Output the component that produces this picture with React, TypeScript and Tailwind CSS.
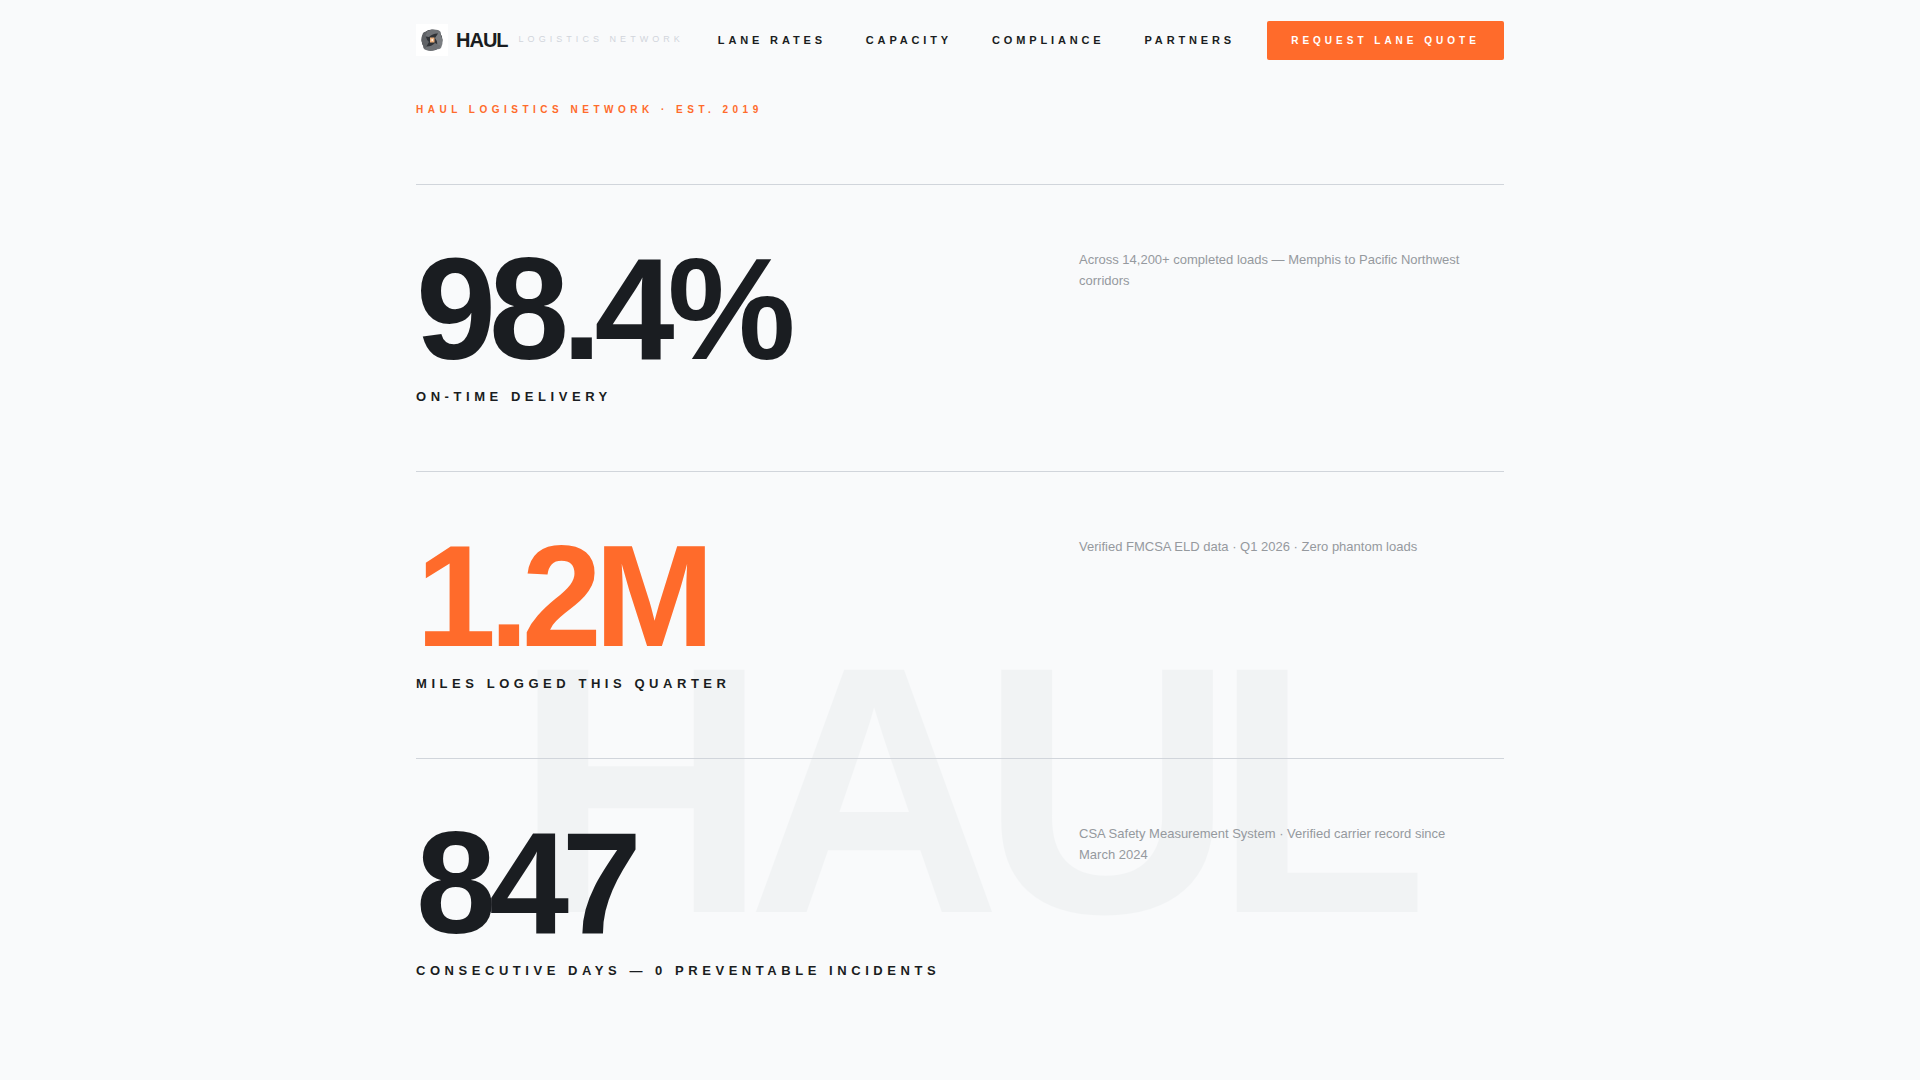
const nav = ['LANE RATES', 'CAPACITY', 'COMPLIANCE', 'PARTNERS']

const stats = [
  {
    value: '98.4%',
    label: 'ON-TIME DELIVERY',
    note: 'Across 14,200+ completed loads — Memphis to Pacific Northwest corridors',
    color: 'text-[#1a1d21]',
  },
  {
    value: '1.2M',
    label: 'MILES LOGGED THIS QUARTER',
    note: 'Verified FMCSA ELD data · Q1 2026 · Zero phantom loads',
    color: 'text-[#ff6b2b]',
  },
  {
    value: '847',
    label: 'CONSECUTIVE DAYS — 0 PREVENTABLE INCIDENTS',
    note: 'CSA Safety Measurement System · Verified carrier record since March 2024',
    color: 'text-[#1a1d21]',
  },
]

function Logo() {
  return (
    <svg width="32" height="32" viewBox="0 0 32 32" className="bg-white">
      <circle cx="16" cy="16" r="10.5" fill="#2f3236" />
      <path d="M7 12 Q11 4 22 6 Q25 7 25 10 Q18 8 13 13 Z" fill="#6f7276" />
      <path d="M23 8 Q29 16 25 24 Q23 26 20 25 Q23 19 19 14 Z" fill="#7a7d81" />
      <path d="M25 22 Q18 29 10 26 Q7 25 7 22 Q14 24 19 19 Z" fill="#6f7276" />
      <path d="M9 25 Q3 17 7 9 Q9 7 11 8 Q8 13 13 18 Z" fill="#5f6266" />
      <rect x="14" y="13.5" width="4.5" height="5" fill="#eeb27f" />
      <rect x="15.5" y="15" width="1.5" height="2" fill="#fff1e2" />
    </svg>
  )
}

export default function App() {
  return (
    <div className="relative min-h-[1080px] overflow-hidden bg-[#f9fafb] font-['Liberation_Sans',Arial,sans-serif]">
      <div
        aria-hidden
        className="absolute left-[514px] top-[614px] text-[352px] font-bold leading-none tracking-[-0.06em] text-[#2a4a50] opacity-[0.03]"
      >
        HAUL
      </div>
      <div className="relative mx-auto w-[1088px]">
        <header className="flex h-20 items-center justify-between">
          <div className="flex items-center">
            <Logo />
            <span className="ml-[8px] text-[20px] font-bold tracking-[-0.05em] text-[#1a1d21]">HAUL</span>
            <span className="ml-[11px] text-[9px] tracking-[0.45em] text-[#d1d5db]">LOGISTICS NETWORK</span>
          </div>
          <nav className="flex items-center gap-10">
            {nav.map((item) => (
              <a key={item} className="text-[11px] font-bold tracking-[0.35em] text-[#1a1d21]">
                {item}
              </a>
            ))}
            <button className="-ml-2 h-[39px] w-[237px] rounded-[2px] bg-[#ff6b2b] text-[10px] font-bold tracking-[0.4em] text-white">
              REQUEST LANE QUOTE
            </button>
          </nav>
        </header>

        <p className="mt-[22px] text-[10px] font-bold tracking-[0.45em] text-[#ff6b2b]">
          HAUL LOGISTICS NETWORK · EST. 2019
        </p>

        <div className="mt-[67px]">
          {stats.map((stat) => (
            <section key={stat.value} className="flex h-[287px] border-t border-[#d1d5db] pt-[64px]">
              <div className="w-[663px]">
                <div className={`-mt-[11px] text-[144px] font-bold leading-none tracking-[-0.05em] ${stat.color}`}>
                  {stat.value}
                </div>
                <div className="mt-[5px] text-[13px] font-bold tracking-[0.35em] text-[#1a1d21]">{stat.label}</div>
              </div>
              <p className="w-[400px] text-[13px] leading-[21px] text-[#95999e]">{stat.note}</p>
            </section>
          ))}
        </div>
      </div>
    </div>
  )
}
